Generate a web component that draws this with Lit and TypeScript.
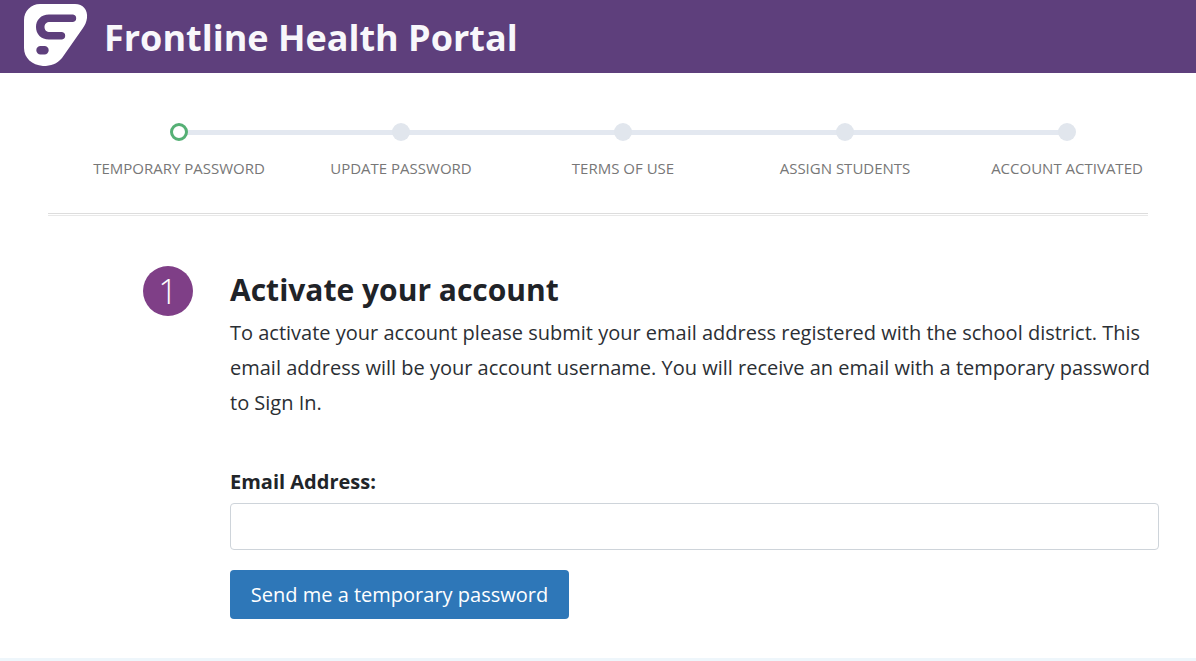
import { LitElement, html, css } from "lit";
import { customElement } from "lit/decorators.js";

const STEPS = ["TEMPORARY PASSWORD", "UPDATE PASSWORD", "TERMS OF USE", "ASSIGN STUDENTS", "ACCOUNT ACTIVATED"];

@customElement("app-root")
export class AppRoot extends LitElement {
  static styles = css`
    :host { display: block; height: 661px; overflow: hidden; background: #fff; font-family: "Open Sans", sans-serif; color: #212529; position: relative; }
    .bar { height: 73px; background: #5e3f7c; display: flex; align-items: flex-start; padding-left: 23px; box-sizing: border-box; overflow: hidden; }
    .logo { width: 65px; height: 66px; margin-top: 3px; flex: none; display: block; }
    .brand { margin: 1px 0 0 16px; font-size: 36px; font-weight: 700; line-height: 73px; color: #f8f7fb; white-space: nowrap; }
    .steps { margin: 50px 0 0 68px; width: 1111px; display: flex; height: 64px; }
    .step { width: 222px; flex: none; display: flex; flex-direction: column; align-items: center; position: relative; }
    .step:not(:last-child)::after { content: ""; position: absolute; top: 7px; left: 50%; width: 100%; height: 5px; background: #e3e8f0; }
    .dot { width: 18px; height: 18px; border-radius: 50%; background: #e1e6ed; position: relative; z-index: 1; box-sizing: border-box; }
    .dot.on { background: #fff; border: 3px solid #55b075; }
    .lbl { margin-top: 17px; font-size: 15px; line-height: 20px; color: #777; white-space: nowrap; }
    hr { margin: 26px 0 0 48px; width: 1100px; height: 3px; box-sizing: border-box; border: 0; border-top: 1px solid #ddd; border-bottom: 1px solid #e8e8e8; }
    .main { margin: 50px 0 0 143px; display: flex; }
    .num { width: 50px; height: 50px; border-radius: 50%; background: #7f3f87; color: #fff; font-size: 34px; font-weight: 300; display: flex; align-items: center; justify-content: center; flex: none; }
    .body { margin-left: 37px; width: 929px; }
    h2 { margin: 3px 0 0; font-size: 30px; line-height: 41px; font-weight: 700; color: #1f2328; }
    p { margin: 5px 0 0; font-size: 20px; line-height: 35px; color: #2b2f34; white-space: nowrap; }
    label { display: block; margin-top: 49px; font-size: 20px; line-height: 25px; font-weight: 700; color: #212529; }
    input { display: block; margin-top: 9px; width: 929px; height: 47px; box-sizing: border-box; border: 1px solid #ced4da; border-radius: 4px; background: #fff; }
    button { display: block; margin-top: 20px; width: 339px; height: 49px; border: 0; border-radius: 4px; background: #2e77b8; color: #fff; font-family: inherit; font-size: 20px; padding: 0; }
    .foot { position: absolute; left: 0; right: 0; bottom: 0; height: 3px; background: #eef6fb; }
  `;

  render() {
    return html`
      <header class="bar">
        <svg class="logo" viewBox="0 0 65 66" aria-hidden="true">
          <path fill="#fff" fill-rule="evenodd" d="M17 1H52C60 1 65 7 64 15C63.500 19 62 22 60 25L39 55C34 61 28 63 20 63C9 62 1 55 1 45V17C1 8 8 1 17 1ZM26 11.500C18 11.500 13 17 13 24C13 31 18 36.500 26 36.500H39A3.800 3.800 0 0 0 39 29H27C23.500 29 21.500 27 21.500 24C21.500 21 23.500 19 27 19H50A3.800 3.800 0 0 0 50 11.500ZM17.500 43A4.200 4.200 0 0 0 17.500 51.400H21.500A4.200 4.200 0 0 0 21.500 43Z"/>
        </svg>
        <h1 class="brand">Frontline Health Portal</h1>
      </header>
      <div class="steps">
        ${STEPS.map((s, i) => html`<div class="step"><span class="dot ${i === 0 ? "on" : ""}"></span><span class="lbl">${s}</span></div>`)}
      </div>
      <hr />
      <section class="main">
        <div class="num">1</div>
        <div class="body">
          <h2>Activate your account</h2>
          <p>To activate your account please submit your email address registered with the school district. This<br />email address will be your account username. You will receive an email with a temporary password<br />to Sign In.</p>
          <label for="em">Email Address:</label>
          <input id="em" type="text" />
          <button>Send me a temporary password</button>
        </div>
      </section>
      <div class="foot"></div>
    `;
  }
}
